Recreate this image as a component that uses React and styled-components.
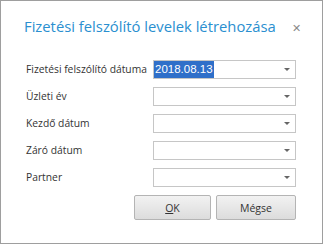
import React from 'react'
import styled, { createGlobalStyle } from 'styled-components'

const Global = createGlobalStyle`
  body {
    margin: 0;
    background: #fff;
    font-family: 'Open Sans', 'Noto Sans', sans-serif;
  }
`

const Dialog = styled.div`
  width: 323px;
  height: 244px;
  box-sizing: border-box;
  border: 1px solid #9e9e9e;
  background: #fff;
  display: flex;
  flex-direction: column;
`

const TitleBar = styled.div`
  display: flex;
  align-items: center;
  justify-content: space-between;
  padding: 14px 21px 0 23px;
  height: 22px;
  h1 {
    margin: 0;
    font-size: 14.8px;
    font-weight: 400;
    color: #2a8fd0;
    white-space: nowrap;
  }
`

const Close = styled.span`
  font-size: 11px;
  color: #8a8a8a;
  line-height: 1;
  margin-top: 2px;
`

const Form = styled.div`
  display: grid;
  grid-template-columns: 127px 143px;
  row-gap: 8px;
  padding: 23px 0 0 25px;
`

const Label = styled.label`
  font-size: 10.3px;
  color: #333;
  line-height: 19px;
  white-space: nowrap;
`

const Field = styled.div`
  height: 19px;
  box-sizing: border-box;
  border: 1px solid #c6c6c6;
  background: #fff;
  display: flex;
  align-items: center;
  padding: 0 5px 0 0;
  span {
    flex: 1;
    display: flex;
  }
  mark {
    background: #2f6fc9;
    color: #fff;
    font-family: 'Liberation Sans', sans-serif;
    font-size: 11.5px;
    line-height: 17px;
    padding: 0 1px;
  }
  &::after {
    content: '';
    border-left: 3px solid transparent;
    border-right: 3px solid transparent;
    border-top: 3px solid #666;
  }
`

const Buttons = styled.div`
  display: flex;
  justify-content: flex-end;
  gap: 5px;
  padding: 8px 26px 0 0;
`

const Button = styled.button`
  width: ${p => p.$w}px;
  height: 25px;
  box-sizing: border-box;
  border: 1px solid #b4b4b4;
  border-radius: 2px;
  background: linear-gradient(#f2f2f2, #dcdcdc);
  font-family: 'Open Sans', 'Noto Sans', sans-serif;
  font-size: 10.5px;
  color: #333;
  padding: 0;
  u {
    text-decoration-thickness: 1px;
  }
`

const fields = [
  ['Fizetési felszólító dátuma', '2018.08.13'],
  ['Üzleti év', ''],
  ['Kezdő dátum', ''],
  ['Záró dátum', ''],
  ['Partner', ''],
]

export default function App() {
  return (
    <>
      <Global />
      <Dialog>
        <TitleBar>
          <h1>Fizetési felszólító levelek létrehozása</h1>
          <Close>✕</Close>
        </TitleBar>
        <Form>
          {fields.map(([label, value]) => (
            <React.Fragment key={label}>
              <Label>{label}</Label>
              <Field>
                <span>{value && <mark>{value}</mark>}</span>
              </Field>
            </React.Fragment>
          ))}
        </Form>
        <Buttons>
          <Button $w={77}><u>O</u>K</Button>
          <Button $w={80}>Mégse</Button>
        </Buttons>
      </Dialog>
    </>
  )
}
